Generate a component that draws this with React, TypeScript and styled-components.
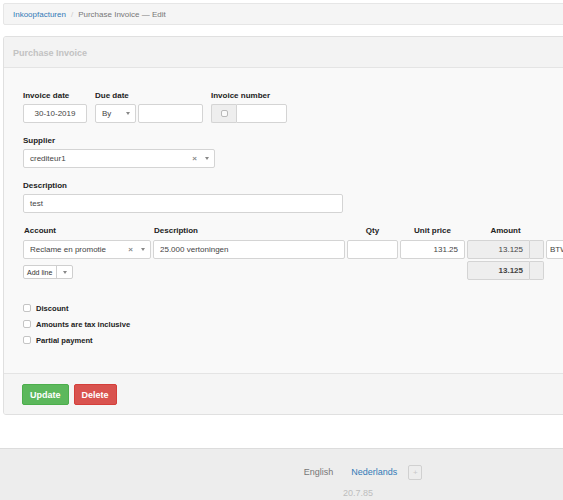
import React from 'react';
import styled, { createGlobalStyle } from 'styled-components';

const GlobalStyle = createGlobalStyle`
  html, body {
    margin: 0;
    padding: 0;
    background: #ffffff;
    overflow: hidden;
  }
  body {
    font-family: "Liberation Sans", Arial, Helvetica, sans-serif;
    color: #333;
    font-size: 8px;
  }
  * { box-sizing: border-box; }
`;

const Page = styled.div`
  width: 726px;
  padding-top: 3px;
`;

const Breadcrumb = styled.div`
  margin: 0 3px;
  height: 22px;
  display: flex;
  align-items: center;
  gap: 4px;
  padding: 0 9px;
  background: #f5f5f5;
  border: 1px solid #e6e6e6;
  border-radius: 2px;
  font-size: 8px;
  color: #777;
`;

const Crumb = styled.a`
  color: #337ab7;
  text-decoration: none;
`;

const Sep = styled.span`
  color: #ccc;
  padding: 0 1px;
`;

const Panel = styled.div`
  margin: 11px 3px 0;
  border: 1px solid #e0e0e0;
  border-radius: 3px;
  background: #f9f9f9;
  overflow: hidden;
`;

const PanelHeading = styled.div`
  height: 31px;
  display: flex;
  align-items: center;
  padding-left: 9px;
  padding-top: 1px;
  background: #f3f3f3;
  border-bottom: 1px solid #e4e4e4;
  font-size: 9px;
  font-weight: bold;
  color: #c2c2c2;
`;

const PanelBody = styled.div`
  padding: 23px 19px 25px;
`;

const PanelFooter = styled.div`
  display: flex;
  gap: 5px;
  padding: 10px 18px 9px;
  background: #f5f5f5;
  border-top: 1px solid #e4e4e4;
`;

const FieldRow = styled.div`
  display: flex;
  gap: 8px;
  margin-bottom: 13px;
`;

const Field = styled.div<{ $w?: number }>`
  display: flex;
  flex-direction: column;
  width: ${p => (p.$w ? `${p.$w}px` : 'auto')};
`;

const Label = styled.label`
  display: block;
  font-weight: bold;
  font-size: 8px;
  line-height: 10px;
  margin-bottom: 3px;
  color: #222;
`;

const Input = styled.div<{ $w?: number; $align?: string; $ro?: boolean; $bold?: boolean; $left?: boolean; $right?: boolean }>`
  height: 19px;
  width: ${p => (p.$w ? `${p.$w}px` : '100%')};
  display: flex;
  align-items: center;
  justify-content: ${p => p.$align || 'flex-start'};
  padding: 0 6px;
  background: ${p => (p.$ro ? '#eeeeee' : '#ffffff')};
  border: 1px solid #d4d4d4;
  border-radius: ${p =>
    p.$left ? '2px 0 0 2px' : p.$right ? '0 2px 2px 0' : '2px'};
  font-size: 8px;
  font-weight: ${p => (p.$bold ? 'bold' : 'normal')};
  color: #444;
  white-space: nowrap;
  overflow: hidden;
  flex-shrink: 0;
`;

const Group = styled.div`
  display: flex;
`;

const Addon = styled.div<{ $w: number }>`
  width: ${p => p.$w}px;
  height: 19px;
  display: flex;
  align-items: center;
  justify-content: center;
  background: #eeeeee;
  border: 1px solid #d4d4d4;
  border-radius: 0 2px 2px 0;
  border-left: none;
  flex-shrink: 0;
`;

const AddonLeft = styled(Addon)`
  border-left: 1px solid #d4d4d4;
  border-right: none;
  border-radius: 2px 0 0 2px;
`;

const SmallBox = styled.span`
  width: 7px;
  height: 7px;
  border: 1px solid #b9b9b9;
  border-radius: 2px;
  background: #fafafa;
`;

const SelectBox = styled(Input)`
  justify-content: space-between;
  padding-right: 5px;
`;

const SelectIcons = styled.span`
  display: flex;
  align-items: center;
  gap: 8px;
  color: #888;
`;

const Clear = styled.span`
  font-size: 8px;
  color: #888;
  font-weight: bold;
`;

const Caret = styled.span`
  width: 0;
  height: 0;
  border-left: 2px solid transparent;
  border-right: 2px solid transparent;
  border-top: 3px solid #888;
`;

const LineGrid = styled.div`
  display: grid;
  grid-template-columns: 128px 192px 51px 65px 77px 60px;
  column-gap: 2px;
  row-gap: 2px;
  align-items: end;
`;

const ColHead = styled.div<{ $center?: boolean }>`
  font-weight: bold;
  font-size: 8px;
  line-height: 10px;
  text-align: ${p => (p.$center ? 'center' : 'left')};
  padding-left: ${p => (p.$center ? 0 : 1)}px;
  margin-bottom: 2px;
  color: #222;
`;

const SplitButton = styled.div`
  display: inline-flex;
  height: 14px;
  border: 1px solid #cfcfcf;
  border-radius: 2px;
  background: #fff;
  font-size: 7px;
  color: #333;
  margin-bottom: 1px;
  width: fit-content;
`;

const SplitMain = styled.span`
  display: flex;
  align-items: center;
  padding: 0 4px 0 3px;
  border-right: 1px solid #cfcfcf;
`;

const SplitCaret = styled.span`
  display: flex;
  align-items: center;
  justify-content: center;
  width: 15px;
`;

const Checks = styled.div`
  margin-top: 20px;
  display: flex;
  flex-direction: column;
`;

const CheckRow = styled.div`
  height: 16px;
  display: flex;
  align-items: center;
  gap: 5px;
  font-size: 7.6px;
  font-weight: bold;
  color: #222;
`;

const CheckBox = styled.span`
  width: 8px;
  height: 8px;
  border: 1px solid #c4c4c4;
  border-radius: 2px;
  background: #fff;
`;

const Button = styled.button<{ $variant: 'success' | 'danger' }>`
  height: 21px;
  padding: 0 7px;
  border-radius: 2px;
  font-family: inherit;
  font-size: 9px;
  font-weight: bold;
  color: #fff;
  cursor: pointer;
  background: ${p => (p.$variant === 'success' ? '#5cb85c' : '#d9534f')};
  border: 1px solid ${p => (p.$variant === 'success' ? '#4cae4c' : '#d43f3a')};
`;

const Footer = styled.footer`
  margin-top: 33px;
  height: 80px;
  background: #ededed;
  border-top: 1px solid #dcdcdc;
  display: flex;
  flex-direction: column;
  align-items: center;
  padding-top: 15px;
`;

const Langs = styled.div`
  display: flex;
  align-items: center;
  gap: 18px;
  font-size: 9px;
  height: 16px;
`;

const Lang = styled.span<{ $active?: boolean }>`
  color: ${p => (p.$active ? '#337ab7' : '#777')};
`;

const PlusBox = styled.span`
  width: 14px;
  height: 15px;
  margin-left: -7px;
  border: 1px solid #d0d0d0;
  border-radius: 2px;
  display: flex;
  align-items: center;
  justify-content: center;
  color: #c8c8c8;
  font-size: 8px;
`;

const Version = styled.div`
  margin-top: 8px;
  font-size: 9px;
  color: #bdbdbd;
  margin-right: 10px;
`;

function Select({ value, w, clear }: { value: string; w: number; clear?: boolean }) {
  return (
    <SelectBox $w={w}>
      <span>{value}</span>
      <SelectIcons>
        {clear && <Clear>×</Clear>}
        <Caret />
      </SelectIcons>
    </SelectBox>
  );
}

export default function App() {
  return (
    <Page>
      <GlobalStyle />
      <Breadcrumb>
        <Crumb href="#">Inkoopfacturen</Crumb>
        <Sep>/</Sep>
        <span>Purchase Invoice — Edit</span>
      </Breadcrumb>

      <Panel>
        <PanelHeading>Purchase Invoice</PanelHeading>
        <PanelBody>
          <FieldRow>
            <Field>
              <Label>Invoice date</Label>
              <Input $w={64} $align="center">30-10-2019</Input>
            </Field>
            <Field>
              <Label>Due date</Label>
              <Group>
                <Select value="By" w={41} />
                <Input $w={65} style={{ marginLeft: 2 }} />
              </Group>
            </Field>
            <Field>
              <Label>Invoice number</Label>
              <Group>
                <AddonLeft $w={25}>
                  <SmallBox />
                </AddonLeft>
                <Input $w={51} $right />
              </Group>
            </Field>
          </FieldRow>

          <FieldRow>
            <Field $w={192}>
              <Label>Supplier</Label>
              <Select value="crediteur1" w={192} clear />
            </Field>
          </FieldRow>

          <FieldRow>
            <Field $w={320}>
              <Label>Description</Label>
              <Input>test</Input>
            </Field>
          </FieldRow>

          <LineGrid>
            <ColHead>Account</ColHead>
            <ColHead>Description</ColHead>
            <ColHead $center>Qty</ColHead>
            <ColHead $center>Unit price</ColHead>
            <ColHead $center>Amount</ColHead>
            <div />

            <Select value="Reclame en promotie" w={128} clear />
            <Input>25.000 vertoningen</Input>
            <Input />
            <Input $align="flex-end">131.25</Input>
            <Group>
              <Input $w={63} $ro $left $align="flex-end">13.125</Input>
              <Addon $w={14} />
            </Group>
            <Input style={{ paddingLeft: 3 }}>BTW</Input>

            <SplitButton>
              <SplitMain>Add line</SplitMain>
              <SplitCaret>
                <Caret />
              </SplitCaret>
            </SplitButton>
            <div />
            <div />
            <div />
            <Group>
              <Input $w={63} $ro $left $bold $align="flex-end">13.125</Input>
              <Addon $w={14} />
            </Group>
            <div />
          </LineGrid>

          <Checks>
            <CheckRow>
              <CheckBox />
              Discount
            </CheckRow>
            <CheckRow>
              <CheckBox />
              Amounts are tax inclusive
            </CheckRow>
            <CheckRow>
              <CheckBox />
              Partial payment
            </CheckRow>
          </Checks>
        </PanelBody>
        <PanelFooter>
          <Button $variant="success">Update</Button>
          <Button $variant="danger">Delete</Button>
        </PanelFooter>
      </Panel>

      <Footer>
        <Langs>
          <Lang>English</Lang>
          <Lang $active>Nederlands</Lang>
          <PlusBox>+</PlusBox>
        </Langs>
        <Version>20.7.85</Version>
      </Footer>
    </Page>
  );
}
